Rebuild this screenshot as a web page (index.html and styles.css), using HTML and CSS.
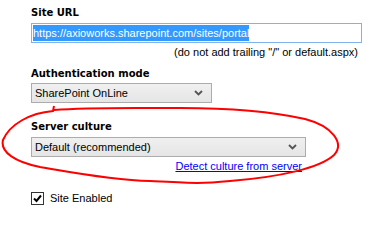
FILE: index.html
```html
<!DOCTYPE html>
<html lang="en">
  <head>
    <meta charset="UTF-8" />
    <title>Site settings</title>
    <link rel="stylesheet" href="styles.css">
  </head>
  <body>
    <div class="page">
      <div class="form">
        <div class="field">
          <div class="label">Site URL</div>
          <div class="textbox wide"><span class="selected">https://axioworks.sharepoint.com/sites/portal</span></div>
          <div class="note">(do not add trailing "/" or default.aspx)</div>
        </div>

        <div class="field">
          <div class="label">Authentication mode</div>
          <div class="combo auth">
            <span>SharePoint OnLine</span>
            <svg class="chevron" width="9" height="6" viewBox="0 0 9 6"><path d="M1 1 L4.5 4.5 L8 1" fill="none" stroke="#555" stroke-width="1.8"/></svg>
          </div>
        </div>

        <div class="field culture">
          <div class="label">Server culture</div>
          <div class="combo culture-box">
            <span>Default (recommended)</span>
            <svg class="chevron" width="9" height="6" viewBox="0 0 9 6"><path d="M1 1 L4.5 4.5 L8 1" fill="none" stroke="#555" stroke-width="1.8"/></svg>
          </div>
          <div class="note link-row"><a href="#" class="link">Detect culture from server</a></div>
        </div>

        <label class="check">
          <span class="box">
            <svg width="11" height="11" viewBox="0 0 11 11"><path d="M2 5.5 L4.5 8 L9 2.5" fill="none" stroke="#000" stroke-width="2"/></svg>
          </span>
          Site Enabled
        </label>
      </div>

      <!-- hand drawn annotation round the culture field -->
      <svg class="scribble" width="371" height="243" viewBox="0 0 371 243">
        <path d="M54 106 L53 111 C30 113 10 124 3 140 C0 152 15 162 40 167 C70 172 110 180 150 181 C190 183 200 184 230 181 C280 177 320 168 334 155 C345 143 332 126 305 119 C265 110 220 108 180 108 C130 108 90 107 54 110" fill="none" stroke="#ff0000" stroke-width="2"/>
      </svg>
    </div>
  </body>
</html>
```

FILE: styles.css
```css
* {
  box-sizing: border-box;
  margin: 0;
  padding: 0;
}
body {
  background: #fff;
  color: #000;
  font-family: "Liberation Sans", Arial, sans-serif;
  font-size: 11px;
}
.page {
  position: relative;
  width: 371px;
  height: 243px;
  overflow: hidden;
}
.form {
  padding: 7px 0 0 31px;
}
.label {
  font-family: "DejaVu Sans", Tahoma, sans-serif;
  font-weight: bold;
  font-size: 10px;
  line-height: 12px;
}
.field + .field .label {
  margin-top: 9px;
}
.field.culture .label {
  margin-top: 18px;
}
.textbox {
  margin-top: 4px;
  height: 20px;
  border: 1px solid #7eb4ea;
  background: #fff;
  padding: 1px 1px;
}
.textbox.wide {
  width: 331px;
}
.selected {
  display: inline-block;
  line-height: 16px;
  background: #3399ff;
  color: #fff;
}
.note {
  margin-top: 3px;
  line-height: 13px;
  text-align: right;
  width: 327px;
}
.combo {
  margin-top: 3px;
  height: 20px;
  border: 1px solid #acacac;
  background: linear-gradient(#f0f0f0, #e5e5e5);
  display: flex;
  align-items: center;
  justify-content: space-between;
  padding: 0 8px 0 3px;
  line-height: 16px;
}
.combo.auth {
  width: 181px;
}
.combo.culture-box {
  margin-top: 4px;
  width: 275px;
}
.link-row {
  width: 271px;
}
.link {
  color: #0000ff;
  text-decoration: underline;
}
.check {
  margin-top: 19px;
  display: flex;
  align-items: center;
  gap: 6px;
  line-height: 13px;
}
.box {
  width: 13px;
  height: 13px;
  border: 1px solid #333;
  background: #fff;
  display: flex;
  align-items: center;
  justify-content: center;
}
.box svg {
  display: block;
}
.scribble {
  position: absolute;
  left: 0;
  top: 0;
  pointer-events: none;
}
```
